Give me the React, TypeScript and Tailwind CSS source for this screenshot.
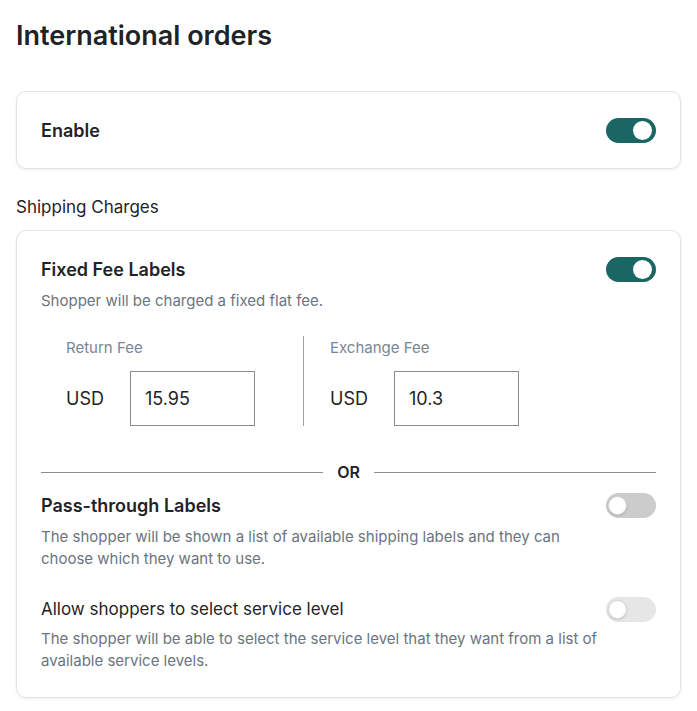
import React from 'react';

function Toggle({ on, faded }: { on: boolean; faded?: boolean }) {
    const track = on ? 'bg-[#1a6664]' : faded ? 'bg-[#e6e6e6]' : 'bg-[#cccccc]';
    return (
        <div className={`relative w-[50px] h-[25px] rounded-full shrink-0 ${track}`}>
            <span
                className={`absolute top-[3px] w-[19px] h-[19px] rounded-full bg-white ${
                    on ? 'right-[4px]' : 'left-[2px] border border-[#d6d6d6] shadow-sm'
                }`}
            ></span>
        </div>
    );
}

function FeeField({ label, value }: { label: string; value: string }) {
    return (
        <div className="flex flex-col">
            <span className="text-[15px] text-[#7a8594] leading-5 mt-[1px]">{label}</span>
            <div className="flex items-center mt-[13px]">
                <span className="text-[18px] text-[#1f2328] w-[64px]">USD</span>
                <div className="w-[125px] h-[55px] border border-[#8a8a8a] flex items-center pl-[14px] text-[18px] text-[#1f2328]">
                    {value}
                </div>
            </div>
        </div>
    );
}

export default function App() {
    return (
        <div className="min-h-[711px] bg-white px-4 pt-[18px] pb-4 font-['Inter',sans-serif] text-[#1f2328]">
            <h1 className="text-[27px] font-semibold leading-9">International orders</h1>

            {/* Enable card */}
            <div className="mt-[37px] rounded-[10px] border border-[#e3e3e3] shadow-[0_1px_3px_rgba(0,0,0,0.08)] h-[78px] flex items-center justify-between px-6">
                <span className="text-[18px] font-semibold">Enable</span>
                <Toggle on />
            </div>

            <h2 className="mt-[26px] text-[17px] leading-6">Shipping Charges</h2>

            {/* Shipping card */}
            <div className="mt-[11px] rounded-[10px] border border-[#e3e3e3] shadow-[0_1px_3px_rgba(0,0,0,0.08)] px-6 pt-[25px] pb-[25px]">
                <div className="flex items-center justify-between">
                    <span className="text-[18px] font-semibold">Fixed Fee Labels</span>
                    <Toggle on />
                </div>
                <p className="text-[15px] text-[#6b7480] mt-[8px] leading-5">Shopper will be charged a fixed flat fee.</p>

                <div className="flex mt-[26px] pl-[25px]">
                    <FeeField label="Return Fee" value="15.95" />
                    <div className="w-px bg-[#a0a0a0] mx-[48px] h-[90px] mt-[-1px]"></div>
                    <div className="ml-[-22px]">
                        <FeeField label="Exchange Fee" value="10.3" />
                    </div>
                </div>

                <div className="flex items-center mt-[34px] gap-[14px]">
                    <div className="flex-1 h-px bg-[#8f8f8f]"></div>
                    <span className="text-[16px] font-semibold">OR</span>
                    <div className="flex-1 h-px bg-[#8f8f8f]"></div>
                </div>

                <div className="flex items-center justify-between mt-[8px]">
                    <span className="text-[18px] font-semibold">Pass-through Labels</span>
                    <Toggle on={false} />
                </div>
                <p className="text-[15px] text-[#6b7480] mt-[7px] leading-[22px] max-w-[565px]">
                    The shopper will be shown a list of available shipping labels and they can choose which they want to use.
                </p>

                <div className="flex items-center justify-between mt-[27px]">
                    <span className="text-[17px]">Allow shoppers to select service level</span>
                    <Toggle on={false} faded />
                </div>
                <p className="text-[15px] text-[#6b7480] mt-[5px] leading-[22px] max-w-[565px]">
                    The shopper will be able to select the service level that they want from a list of available service levels.
                </p>
            </div>
        </div>
    );
}
